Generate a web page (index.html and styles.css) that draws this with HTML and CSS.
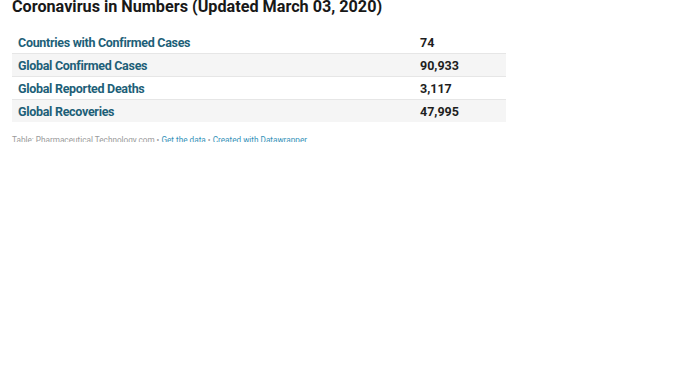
FILE: index.html
```html
<!DOCTYPE html>
<html>
<head>
<meta charset="utf-8">
<link rel="stylesheet" href="styles.css">
</head>
<body>
<div class="chart">
  <h1 class="title">Coronavirus in Numbers (Updated March 03, 2020)</h1>
  <table class="data">
    <tbody>
      <tr><td class="label">Countries with Confirmed Cases</td><td class="value">74</td></tr>
      <tr class="alt"><td class="label">Global Confirmed Cases</td><td class="value">90,933</td></tr>
      <tr><td class="label">Global Reported Deaths</td><td class="value">3,117</td></tr>
      <tr class="alt"><td class="label">Global Recoveries</td><td class="value">47,995</td></tr>
    </tbody>
  </table>
  <div class="footer">Table: Pharmaceutical Technology.com • <a class="link">Get the data</a> • <a class="link">Created with Datawrapper</a></div>
</div>
</body>
</html>
```
FILE: styles.css
```css
html, body {
  margin: 0;
  padding: 0;
  background: #fff;
}
.chart {
  height: 142px;
  overflow: hidden;
  padding: 0 12px;
  width: 494px;
  font-family: Roboto, "Liberation Sans", sans-serif;
}
.title {
  margin: -3px 0 0 0;
  font-size: 16.2px;
  line-height: 20px;
  font-weight: 700;
  color: #181818;
}
.data {
  width: 494px;
  border-collapse: collapse;
  margin-top: 14px;
}
.data td {
  height: 22px;
  padding: 0 6px;
  font-size: 12.5px;
  font-weight: 700;
  border-bottom: 1px solid #e6e6e6;
}
.data tr:last-child td {
  border-bottom: none;
}
.data tr.alt td {
  background: #f5f5f5;
}
.label {
  color: #1d5f78;
  font-weight: 500;
  font-size: 12.5px;
  letter-spacing: -0.3px;
  width: 390px;
}
.value {
  color: #1e1e1e;
}
.footer {
  margin-top: 13px;
  font-size: 8.2px;
  color: #9a9a9a;
  line-height: 10px;
}
.link {
  color: #3391b8;
}
```
